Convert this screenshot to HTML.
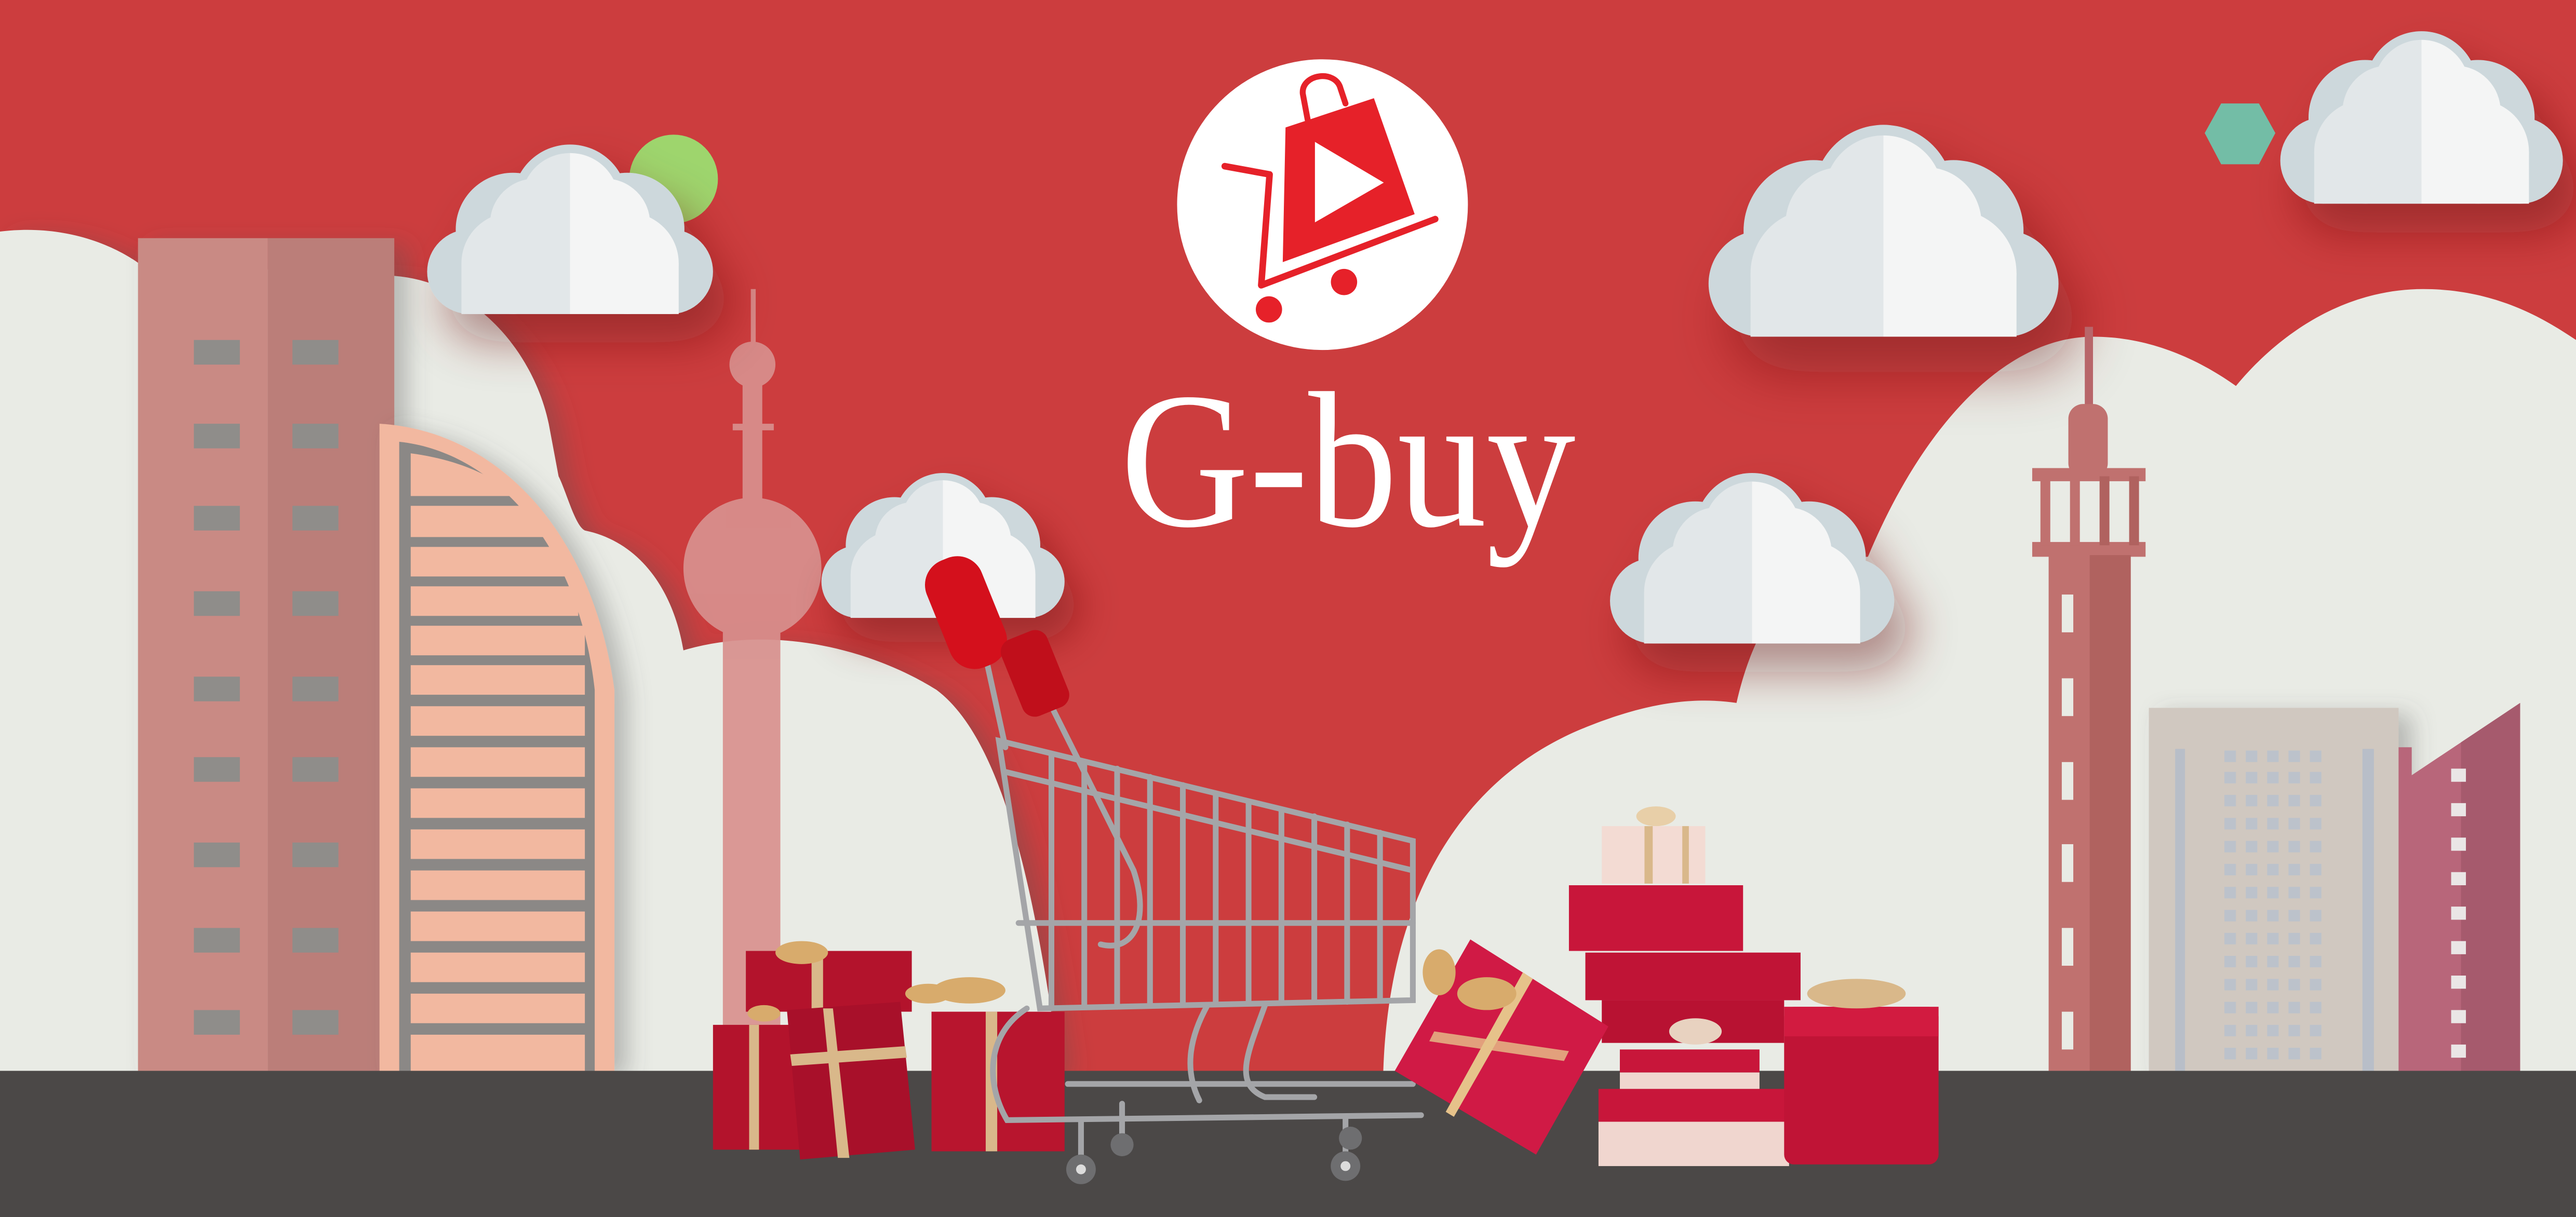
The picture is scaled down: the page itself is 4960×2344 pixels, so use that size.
<!DOCTYPE html>
<html><head><meta charset="utf-8"><style>
html,body{margin:0;padding:0;background:#cc3d3e;}
svg{display:block;}
</style></head><body>
<svg width="4960" height="2344" viewBox="0 0 1568 741" preserveAspectRatio="none" xmlns="http://www.w3.org/2000/svg">
<defs>
<filter id="sh" x="-30%" y="-30%" width="160%" height="180%"><feDropShadow dx="6" dy="10" stdDeviation="8" flood-color="#6a1515" flood-opacity="0.45"/></filter>
<filter id="sh2" x="-30%" y="-30%" width="160%" height="160%"><feDropShadow dx="8" dy="4" stdDeviation="7" flood-color="#555" flood-opacity="0.35"/></filter>
<linearGradient id="cf" x1="0" x2="1" y1="0" y2="0"><stop offset="0.5" stop-color="#e2e7e9"/><stop offset="0.5" stop-color="#f4f5f5"/></linearGradient>
<g id="cloud">
<g fill="#cdd8dc"><circle cx="15" cy="45" r="15"/><circle cx="85" cy="45" r="15"/><circle cx="30" cy="30" r="20"/><circle cx="70" cy="30" r="20"/><circle cx="50" cy="20" r="20"/><rect x="15" y="40" width="70" height="20"/></g>
<g fill="url(#cf)"><circle cx="30" cy="42" r="18"/><circle cx="70" cy="42" r="18"/><circle cx="38" cy="28" r="16"/><circle cx="62" cy="28" r="16"/><circle cx="50" cy="20" r="17"/><rect x="12" y="42" width="76" height="18"/><rect x="24" y="26" width="52" height="20"/></g>
</g>
</defs>
<rect width="1568" height="741" fill="#cc3d3e"/>
<path d="M0,141 C40,136 70,150 84,160 L240,168 C290,172 325,215 334,258 L340,290 C345,300 350,320 356,323 C390,330 410,360 416,396 C470,380 530,395 570,420 C610,450 630,540 645,652 L0,652 Z" fill="#e9ebe5" filter="url(#sh2)"/>
<path d="M842,652 C845,560 880,480 960,445 C1000,428 1030,424 1057,428 C1070,370 1100,340 1137,339 C1170,260 1220,205 1274,205 C1310,205 1340,220 1361,235 C1390,200 1430,176 1475,176 C1520,176 1550,195 1568,207 L1568,652 Z" fill="#e9ebe5"/>
<g filter="url(#sh2)">
<rect x="84" y="145" width="79" height="507" fill="#c98a84"/>
<rect x="163" y="145" width="77" height="507" fill="#bb7e79"/>
</g>
<g fill="#8f8d8a">
<rect x="118" y="207" width="28" height="15"/><rect x="178" y="207" width="28" height="15"/>
<rect x="118" y="258" width="28" height="15"/><rect x="178" y="258" width="28" height="15"/>
<rect x="118" y="308" width="28" height="15"/><rect x="178" y="308" width="28" height="15"/>
<rect x="118" y="360" width="28" height="15"/><rect x="178" y="360" width="28" height="15"/>
<rect x="118" y="412" width="28" height="15"/><rect x="178" y="412" width="28" height="15"/>
<rect x="118" y="461" width="28" height="15"/><rect x="178" y="461" width="28" height="15"/>
<rect x="118" y="513" width="28" height="15"/><rect x="178" y="513" width="28" height="15"/>
<rect x="118" y="565" width="28" height="15"/><rect x="178" y="565" width="28" height="15"/>
<rect x="118" y="615" width="28" height="15"/><rect x="178" y="615" width="28" height="15"/>
</g>
<path d="M231,652 L231,258 C300,262 360,320 374,420 L374,652 Z" fill="#f2b8a0" filter="url(#sh2)"/>
<path d="M243,652 L243,269 C300,275 352,330 362,420 L362,652 Z" fill="#8b8886"/>
<g fill="#f2b8a0">
<path d="M250,276 C280,280 300,290 315,302 L250,302 Z"/>
<path d="M250,308 L322,308 C330,315 336,322 340,327 L250,327Z"/>
<rect x="250" y="333" width="95" height="18"/><rect x="250" y="357" width="102" height="18"/>
<rect x="250" y="381" width="106" height="18"/><rect x="250" y="405" width="106" height="18"/>
<rect x="250" y="430" width="106" height="18"/><rect x="250" y="455" width="106" height="18"/>
<rect x="250" y="480" width="106" height="18"/><rect x="250" y="505" width="106" height="18"/>
<rect x="250" y="530" width="106" height="18"/><rect x="250" y="555" width="106" height="18"/>
<rect x="250" y="580" width="106" height="18"/><rect x="250" y="605" width="106" height="18"/>
<rect x="250" y="630" width="106" height="22"/>
</g>
<g fill="#d8908e" opacity="0.92">
<rect x="457" y="176" width="3" height="40"/>
<circle cx="458" cy="222" r="14"/>
<rect x="452" y="230" width="12" height="80"/>
<rect x="446" y="258" width="25" height="4"/>
<ellipse cx="458" cy="346" rx="42" ry="43"/>
<rect x="440" y="380" width="35" height="272"/>
</g>
<circle cx="410" cy="109" r="27" fill="#9ed56d"/>
<use href="#cloud" transform="translate(260,88) scale(1.74,1.72)" filter="url(#sh)"/>
<use href="#cloud" transform="translate(500,288) scale(1.48,1.47)" filter="url(#sh)"/>
<use href="#cloud" transform="translate(1040,76) scale(2.13,2.15)" filter="url(#sh)"/>
<use href="#cloud" transform="translate(1388,19) scale(1.72,1.75)" filter="url(#sh)"/>
<use href="#cloud" transform="translate(980,288) scale(1.73,1.73)" filter="url(#sh)"/>
<polygon points="1352,63 1375,63 1385,81 1375,100 1352,100 1342,81" fill="#73bda6"/>
<g>
<rect x="1269" y="199" width="5" height="50" fill="#b8666a"/>
<rect x="1259" y="246" width="24" height="45" rx="9" fill="#c0716f"/>
<rect x="1237" y="285" width="69" height="8" fill="#c0716f"/>
<rect x="1237" y="330" width="69" height="9" fill="#c0716f"/>
<rect x="1242" y="290" width="6" height="42" fill="#c0716f"/><rect x="1260" y="290" width="6" height="42" fill="#c0716f"/><rect x="1278" y="290" width="6" height="42" fill="#b0625f"/><rect x="1296" y="290" width="6" height="42" fill="#b0625f"/>
<rect x="1247" y="338" width="26" height="314" fill="#c0716f"/>
<rect x="1272" y="338" width="25" height="314" fill="#b0625f"/>
<g fill="#e9ebe5"><rect x="1255" y="362" width="7" height="23"/><rect x="1255" y="413" width="7" height="23"/><rect x="1255" y="464" width="7" height="23"/><rect x="1255" y="514" width="7" height="23"/><rect x="1255" y="565" width="7" height="23"/><rect x="1255" y="616" width="7" height="23"/></g>
</g>
<rect x="1308" y="431" width="152" height="221" fill="#d0c8c0" filter="url(#sh2)"/>
<rect x="1324" y="456" width="6" height="196" fill="#b8bec8"/><rect x="1438" y="456" width="7" height="196" fill="#b8bec8"/>
<g fill="#bcc2cb">
<path d="M1354,457h7v7h-7zM1367,457h7v7h-7zM1380,457h7v7h-7zM1393,457h7v7h-7zM1406,457h7v7h-7z"/>
<path d="M1354,470h7v7h-7zM1367,470h7v7h-7zM1380,470h7v7h-7zM1393,470h7v7h-7zM1406,470h7v7h-7z"/>
<path d="M1354,484h7v7h-7zM1367,484h7v7h-7zM1380,484h7v7h-7zM1393,484h7v7h-7zM1406,484h7v7h-7z"/>
<path d="M1354,498h7v7h-7zM1367,498h7v7h-7zM1380,498h7v7h-7zM1393,498h7v7h-7zM1406,498h7v7h-7z"/>
<path d="M1354,512h7v7h-7zM1367,512h7v7h-7zM1380,512h7v7h-7zM1393,512h7v7h-7zM1406,512h7v7h-7z"/>
<path d="M1354,526h7v7h-7zM1367,526h7v7h-7zM1380,526h7v7h-7zM1393,526h7v7h-7zM1406,526h7v7h-7z"/>
<path d="M1354,540h7v7h-7zM1367,540h7v7h-7zM1380,540h7v7h-7zM1393,540h7v7h-7zM1406,540h7v7h-7z"/>
<path d="M1354,554h7v7h-7zM1367,554h7v7h-7zM1380,554h7v7h-7zM1393,554h7v7h-7zM1406,554h7v7h-7z"/>
<path d="M1354,568h7v7h-7zM1367,568h7v7h-7zM1380,568h7v7h-7zM1393,568h7v7h-7zM1406,568h7v7h-7z"/>
<path d="M1354,582h7v7h-7zM1367,582h7v7h-7zM1380,582h7v7h-7zM1393,582h7v7h-7zM1406,582h7v7h-7z"/>
<path d="M1354,596h7v7h-7zM1367,596h7v7h-7zM1380,596h7v7h-7zM1393,596h7v7h-7zM1406,596h7v7h-7z"/>
<path d="M1354,610h7v7h-7zM1367,610h7v7h-7zM1380,610h7v7h-7zM1393,610h7v7h-7zM1406,610h7v7h-7z"/>
<path d="M1354,624h7v7h-7zM1367,624h7v7h-7zM1380,624h7v7h-7zM1393,624h7v7h-7zM1406,624h7v7h-7z"/>
<path d="M1354,638h7v7h-7zM1367,638h7v7h-7zM1380,638h7v7h-7zM1393,638h7v7h-7zM1406,638h7v7h-7z"/>
</g>
<path d="M1460,455 L1468,455 L1468,472 L1534,428 L1534,652 L1460,652 Z" fill="#b8667a"/>
<path d="M1498,452 L1534,428 L1534,652 L1498,652 Z" fill="#a65a6d"/>
<g fill="#eae6e6"><rect x="1492" y="468" width="9" height="8"/><rect x="1492" y="489" width="9" height="8"/><rect x="1492" y="510" width="9" height="8"/><rect x="1492" y="531" width="9" height="8"/><rect x="1492" y="552" width="9" height="8"/><rect x="1492" y="573" width="9" height="8"/><rect x="1492" y="594" width="9" height="8"/><rect x="1492" y="615" width="9" height="8"/><rect x="1492" y="636" width="9" height="8"/></g>
<rect x="0" y="652" width="1568" height="89" fill="#4b4847"/>
<circle cx="805" cy="124.6" r="88.5" fill="#ffffff"/>
<path d="M796,73 L793,57 C792,45 813,42 816,54 L819,63" fill="none" stroke="#e62129" stroke-width="3.6" stroke-linecap="round"/>
<polygon points="782.5,77.6 836.3,59.8 861.1,130.4 780.8,159.6" fill="#e62129"/>
<polygon points="800.4,86.4 842.3,111.2 800.4,135.4" fill="#ffffff"/>
<polyline points="745.5,101.2 772.8,106.2 767.7,173.7 873.6,133.4" fill="none" stroke="#e62129" stroke-width="4" stroke-linecap="round" stroke-linejoin="round"/>
<circle cx="772.4" cy="188.4" r="8" fill="#e62129"/>
<circle cx="818.1" cy="171.7" r="8" fill="#e62129"/>
<text x="682" y="320" font-family="Liberation Serif, serif" font-size="118" fill="#ffffff" textLength="277" lengthAdjust="spacingAndGlyphs">G-buy</text>
<g>
<rect x="454" y="579" width="101" height="37" fill="#b3132c"/>
<rect x="494" y="579" width="7" height="37" fill="#d9b88a"/>
<rect x="434" y="624" width="53" height="76" fill="#b3132c"/>
<rect x="456" y="624" width="6" height="76" fill="#d9b88a"/>
<rect x="567" y="616" width="81" height="85" fill="#b8152e"/>
<rect x="600" y="616" width="7" height="85" fill="#d9b88a"/>
<polygon points="479,615 548,610 557,700 487,706" fill="#a8102a"/>
<polygon points="501,614 507,614 517,705 510,705" fill="#d9b88a"/>
<polygon points="481,642 551,637 552,644 482,649" fill="#d9b88a"/>
<g fill="#d8ab6c"><ellipse cx="488" cy="580" rx="16" ry="7"/><ellipse cx="590" cy="603" rx="22" ry="8"/><ellipse cx="465" cy="617" rx="10" ry="5"/><ellipse cx="565" cy="605" rx="14" ry="6"/></g>
</g>
<g fill="none" stroke="#a4a5a8" stroke-width="3.5" stroke-linecap="round">
<path d="M600,400 L612,455"/><path d="M640,430 L690,530 C700,560 690,580 670,575"/>
<path d="M608,451 L860,512 L860,609 L633,614 Z"/>
<path d="M612,470 L860,530"/><path d="M620,562 L860,562"/>
<path d="M640,459 L640,614 M660,464 L660,613 M680,468 L680,613 M700,473 L700,612 M720,478 L720,612 M740,483 L740,611 M760,488 L760,611 M780,493 L780,610 M800,497 L800,610 M820,502 L820,610 M840,507 L840,609"/>
<path d="M625,614 C600,630 600,660 613,682 L865,679"/>
<path d="M735,612 C725,630 720,650 730,670"/><path d="M770,612 C760,640 750,660 770,668 L800,668"/>
<path d="M650,660 L860,660"/>
<path d="M658,682 L658,705 M819,680 L819,702 M683,672 L683,690"/>
</g>
<g fill="#6e6e70"><circle cx="658" cy="712" r="9"/><circle cx="819" cy="710" r="9"/><circle cx="683" cy="697" r="7"/><circle cx="822" cy="693" r="7"/></g>
<g fill="#dcdcdc"><circle cx="658" cy="712" r="3"/><circle cx="819" cy="710" r="3"/></g>
<rect x="570" y="338" width="36" height="70" rx="16" fill="#d4101c" transform="rotate(-22 588 373)"/>
<rect x="615" y="385" width="30" height="50" rx="8" fill="#c00f1b" transform="rotate(-22 630 410)"/>
<g>
<rect x="975" y="503" width="63" height="35" fill="#f3dbd3"/>
<rect x="1001" y="503" width="5" height="35" fill="#d9b88a"/><rect x="1024" y="503" width="4" height="35" fill="#d9b88a"/>
<ellipse cx="1008" cy="497" rx="12" ry="6" fill="#e8cfa8"/>
<rect x="955" y="539" width="106" height="40" fill="#c8163a"/>
<rect x="965" y="580" width="131" height="29" fill="#c01436"/>
<rect x="975" y="609" width="111" height="26" fill="#b81232"/>
<rect x="986" y="639" width="85" height="14" fill="#c8163a"/><rect x="986" y="653" width="85" height="16" fill="#f0d6cf"/>
<rect x="973" y="663" width="116" height="20" fill="#c8163a"/><rect x="973" y="683" width="116" height="27" fill="#f0d6cf"/>
<ellipse cx="1032" cy="628" rx="16" ry="8" fill="#e8d2c0"/>
<rect x="1086" y="613" width="94" height="96" rx="6" fill="#c01436"/>
<rect x="1086" y="613" width="94" height="18" fill="#d21b40"/>
<ellipse cx="1130" cy="605" rx="30" ry="9" fill="#d9b88a"/>
<polygon points="895,572 979,625 935,703 849,652" fill="#d01a45"/>
<polygon points="927,592 933,596 885,680 880,677" fill="#e6c28a"/>
<polygon points="873,628 955,640 952,646 870,634" fill="#e6c28a" opacity="0.8"/>
<ellipse cx="905" cy="605" rx="18" ry="10" fill="#d8ab6c"/>
<ellipse cx="876" cy="592" rx="10" ry="14" fill="#d8ab6c"/>
</g>
</svg>
</body></html>
